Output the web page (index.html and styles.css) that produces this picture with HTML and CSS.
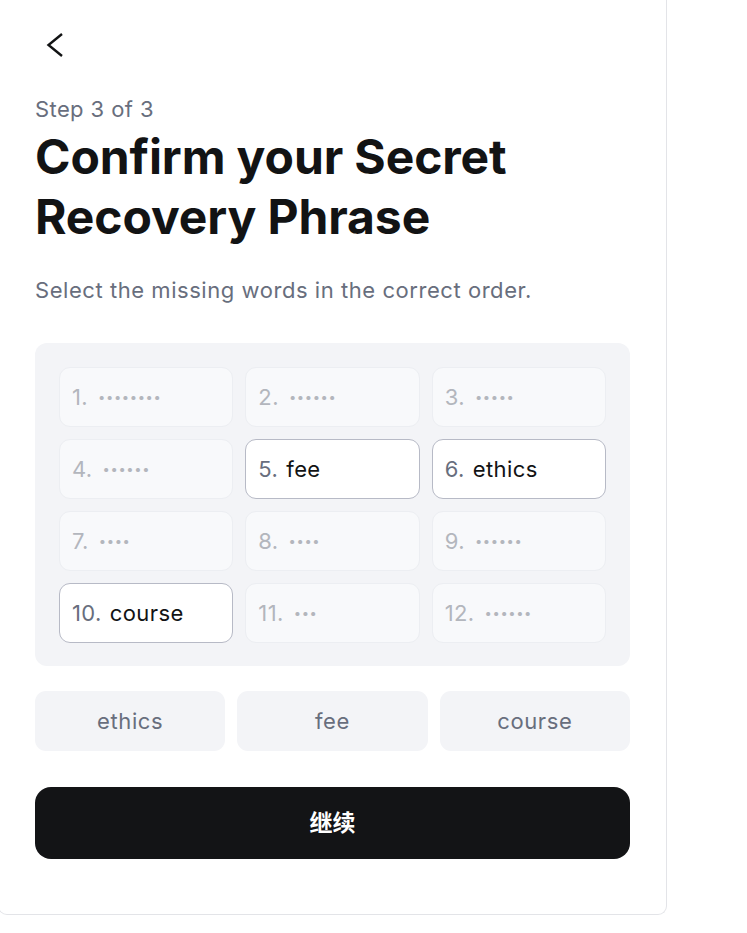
FILE: index.html
```html
<!DOCTYPE html>
<html lang="en">
<head>
<meta charset="utf-8">
<title>Confirm your Secret Recovery Phrase</title>
<link rel="stylesheet" href="styles.css">
</head>
<body>
<main class="card">
  <button class="back" aria-label="Back">
    <svg width="24" height="24" viewBox="0 0 24 24" fill="none" stroke="#121314" stroke-width="2.4" stroke-linecap="butt" stroke-linejoin="miter" overflow="visible"><path d="M22 1 L8.5 12 L22 23"/></svg>
  </button>
  <p class="step">Step 3 of 3</p>
  <h1 class="title">Confirm your Secret Recovery Phrase</h1>
  <p class="subtitle">Select the missing words in the correct order.</p>

  <div class="grid">
    <div class="cell"><span class="num">1.</span><span class="dots">••••••••</span></div>
    <div class="cell"><span class="num">2.</span><span class="dots">••••••</span></div>
    <div class="cell"><span class="num">3.</span><span class="dots">•••••</span></div>
    <div class="cell"><span class="num">4.</span><span class="dots">••••••</span></div>
    <div class="cell filled"><span class="num">5.</span><span class="word">fee</span></div>
    <div class="cell filled"><span class="num">6.</span><span class="word">ethics</span></div>
    <div class="cell"><span class="num">7.</span><span class="dots">••••</span></div>
    <div class="cell"><span class="num">8.</span><span class="dots">••••</span></div>
    <div class="cell"><span class="num">9.</span><span class="dots">••••••</span></div>
    <div class="cell filled"><span class="num">10.</span><span class="word">course</span></div>
    <div class="cell"><span class="num">11.</span><span class="dots">•••</span></div>
    <div class="cell"><span class="num">12.</span><span class="dots">••••••</span></div>
  </div>

  <div class="chips">
    <button class="chip">ethics</button>
    <button class="chip">fee</button>
    <button class="chip">course</button>
  </div>

  <button class="primary">继续</button>
</main>
</body>
</html>
```

FILE: styles.css
```css
* { box-sizing: border-box; }
html, body { margin: 0; padding: 0; background: #ffffff; }
body {
  font-family: Inter, "Noto Sans", "Noto Sans CJK SC", sans-serif;
  color: #121314;
}
.card {
  width: 669px;
  margin-left: -2px;
  padding: 30px 36px 55px 36px;
  border: 1px solid #e3e4e8;
  border-top: none;
  border-radius: 0 0 9px 9px;
  display: flex;
  flex-direction: column;
}
.back {
  width: 40px;
  height: 30px;
  padding: 0;
  margin: 0 0 0 5px;
  border: none;
  background: none;
  display: flex;
  align-items: center;
  justify-content: flex-start;
}
.step {
  margin: 35px 0 0 0;
  font-size: 22px;
  line-height: 28px;
  letter-spacing: 0.4px;
  color: #686e7d;
}
.title {
  margin: 4px 0 0 0;
  font-size: 48px;
  line-height: 60px;
  font-weight: 700;
  letter-spacing: -0.1px;
  color: #121314;
}
.subtitle {
  margin: 29px 0 0 0;
  font-size: 22px;
  line-height: 28px;
  letter-spacing: 0.55px;
  color: #686e7d;
}
.grid {
  margin-top: 39px;
  background: #f3f4f7;
  border-radius: 12px;
  padding: 24px 24px 23px 24px;
  display: grid;
  grid-template-columns: repeat(3, 1fr);
  gap: 12px 12px;
}
.cell {
  height: 60px;
  border: 1px solid #eceef2;
  background: #f8f9fb;
  border-radius: 11px;
  padding: 0 12px;
  display: flex;
  align-items: center;
  gap: 8px;
  font-size: 22px;
  letter-spacing: 0.4px;
}
.cell .num { color: #b3b6bd; }
.cell .dots {
  color: #b3b6bd;
  font-size: 13px;
  letter-spacing: 0.6px;
  margin-left: 2px;
}
.cell.filled {
  background: #ffffff;
  border-color: #b7bac6;
}
.cell.filled .num { color: #686e7d; }
.cell.filled .word { color: #121314; }
.chips {
  margin-top: 25px;
  display: grid;
  grid-template-columns: repeat(3, 1fr);
  gap: 12px;
}
.chip {
  height: 60px;
  border: none;
  border-radius: 11px;
  background: #f3f4f7;
  color: #686e7d;
  font-family: inherit;
  font-size: 22px;
  letter-spacing: 0.6px;
}
.primary {
  margin-top: 36px;
  height: 72px;
  padding: 0 0 4px 0;
  border: none;
  border-radius: 16px;
  background: #131416;
  color: #ffffff;
  font-family: Inter, "Noto Sans CJK SC", sans-serif;
  font-weight: 700;
  font-size: 23px;
}
```
